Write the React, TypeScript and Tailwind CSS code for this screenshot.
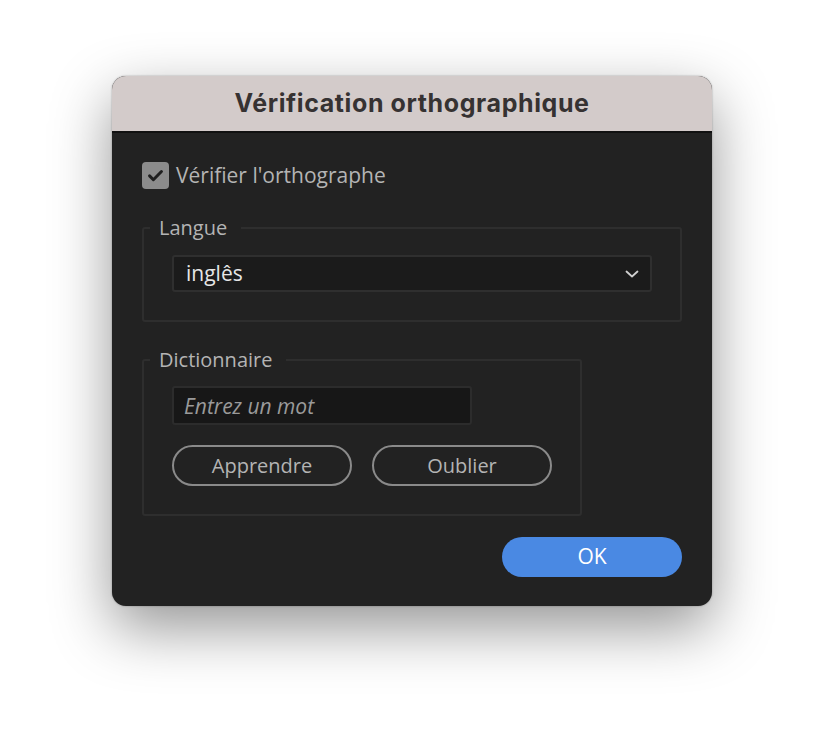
import { useState } from "react";

const bodyFont = { fontFamily: '"Open Sans", "Noto Sans", sans-serif' };

function Checkbox({ checked, onToggle }: { checked: boolean; onToggle: () => void }) {
  return (
    <button
      type="button"
      onClick={onToggle}
      className="flex h-[27px] w-[27px] items-center justify-center rounded-[4px] bg-[#8c8c8c]"
      aria-pressed={checked}
    >
      {checked ? (
        <svg width="19" height="19" viewBox="0 0 24 24" fill="none">
          <path d="M4.5 12.5l4.8 4.8L19.5 7" stroke="#202020" strokeWidth="3.8" strokeLinecap="round" strokeLinejoin="round" />
        </svg>
      ) : null}
    </button>
  );
}

function Group({ label, className, children }: { label: string; className?: string; children: React.ReactNode }) {
  return (
    <fieldset className={"rounded-[3px] border-2 border-[#2e2e2e] " + (className ?? "")}>
      <legend className="ml-[6px] pr-[14px] pl-[9px] text-[20px] leading-[24px] text-[#b4b4b4]">{label}</legend>
      {children}
    </fieldset>
  );
}

export default function App() {
  const [checked, setChecked] = useState(true);
  const [word, setWord] = useState("");

  return (
    <div className="min-h-[754px] bg-white pt-[76px] pl-[112px]" style={bodyFont}>
      <div className="flex w-[600px] flex-col overflow-hidden rounded-[14px] bg-[#222222] shadow-[0_22px_60px_rgba(0,0,0,0.42),0_0_2px_rgba(0,0,0,0.35)]">
        <div className="flex h-[57px] items-center justify-center border-b-2 border-[#111111] bg-[#d3cbca]">
          <h1
            className="text-[25px] font-bold tracking-[0.6px] text-[#363232]"
            style={{ fontFamily: 'Inter, "Liberation Sans", sans-serif' }}
          >
            Vérification orthographique
          </h1>
        </div>

        <div className="flex flex-col px-[30px] pt-[29px] pb-[29px]">
          <label className="flex items-center gap-[7px]">
            <Checkbox checked={checked} onToggle={() => setChecked(!checked)} />
            <span className="text-[21px] leading-[27px] text-[#b4b4b4]">Vérifier l'orthographe</span>
          </label>

          <Group label="Langue" className="mt-[27px]">
            <div className="px-[28px] pt-[15px] pb-[28px]">
              <div className="flex h-[37px] items-center justify-between rounded-[3px] border-2 border-[#2f2f2f] bg-[#1b1b1b] pr-[10px] pl-[12px]">
                <span className="text-[21px] text-[#e6e6e6]">inglês</span>
                <svg width="16" height="16" viewBox="0 0 16 16" fill="none">
                  <path d="M2.5 5.5L8 10.5l5.5-5" stroke="#d0d0d0" strokeWidth="1.8" strokeLinecap="round" strokeLinejoin="round" />
                </svg>
              </div>
            </div>
          </Group>

          <Group label="Dictionnaire" className="mt-[26px] w-[438px]">
            <div className="px-[28px] pt-[14px] pb-[28px]">
              <input
                value={word}
                onChange={(e) => setWord(e.target.value)}
                placeholder="Entrez un mot"
                className="h-[39px] w-[300px] rounded-[3px] border-2 border-[#2c2c2c] bg-[#171717] px-[10px] text-[21px] italic text-[#d0d0d0] outline-none placeholder:text-[#9a9a9a]"
              />
              <div className="mt-[20px] flex gap-[20px]">
                <button
                  type="button"
                  className="h-[41px] w-[180px] rounded-full border-2 border-[#8a8a8a] text-[20px] text-[#b4b4b4]"
                >
                  Apprendre
                </button>
                <button
                  type="button"
                  className="h-[41px] w-[180px] rounded-full border-2 border-[#8a8a8a] text-[20px] text-[#b4b4b4]"
                >
                  Oublier
                </button>
              </div>
            </div>
          </Group>

          <div className="mt-[21px] flex justify-end">
            <button
              type="button"
              className="h-[40px] w-[180px] rounded-full bg-[#4a89e3] text-[21px] font-medium text-white"
            >
              OK
            </button>
          </div>
        </div>
      </div>
    </div>
  );
}
